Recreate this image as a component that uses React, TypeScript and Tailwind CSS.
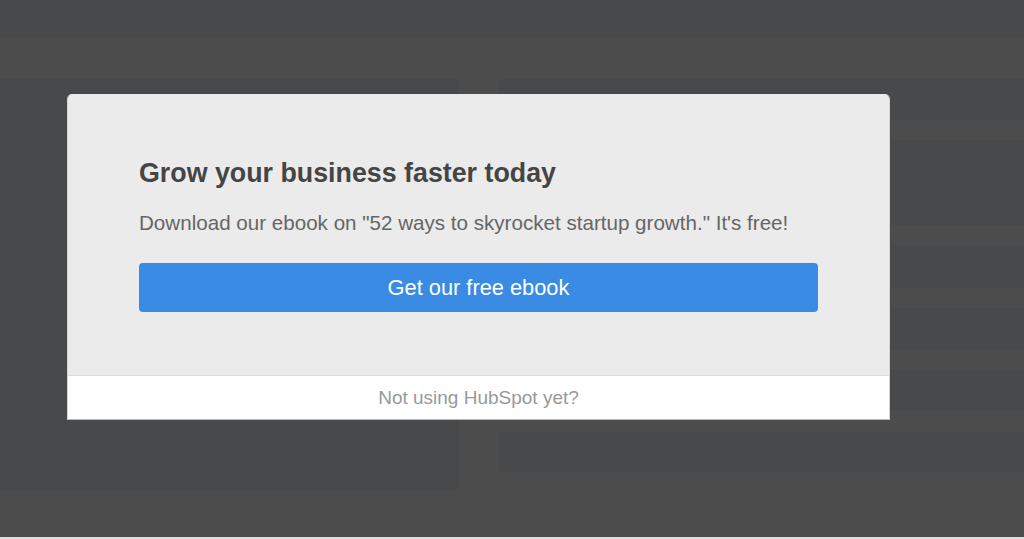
import React from "react";

const font = { fontFamily: '"Liberation Sans", Arial, Helvetica, sans-serif' };

export default function App() {
  return (
    <div className="relative w-[1024px] h-[539px] overflow-hidden bg-[#4c4c4c] flex flex-col" style={font}>
      {/* backdrop */}
      <div className="h-[37px] bg-[#48494b]" />
      <div className="h-[42px]" />
      <div className="h-[411px] flex">
        <div className="w-[458px] bg-[#48494b]" />
        <div className="w-[41px]" />
        <div className="flex-1 flex flex-col">
          <div className="h-[41px] bg-[#48494b]" />
          <div className="h-[20px]" />
          <div className="h-[85px] bg-[#48494b]" />
          <div className="h-[20px]" />
          <div className="h-[43px] bg-[#48494b]" />
          <div className="h-[20px]" />
          <div className="h-[42px] bg-[#48494b]" />
          <div className="h-[20px]" />
          <div className="h-[40px] bg-[#48494b]" />
          <div className="h-[22px]" />
          <div className="h-[40px] bg-[#48494b]" />
        </div>
      </div>
      <div className="flex-1" />
      <div className="h-[2px] bg-[#dedede]" />

      {/* modal */}
      <div className="absolute left-[67px] top-[94px] w-[823px] flex flex-col rounded-t-[5px] overflow-hidden border-x border-[#d4d4d4]">
        <div className="bg-[#ebebeb] pt-[63px] pb-[63px] px-[71px] flex flex-col">
          <h1 className="text-[26.8px] leading-[32px] font-bold text-[#454545]">
            Grow your business faster today
          </h1>
          <p className="mt-[22px] text-[20.6px] leading-[24px] text-[#666666]">
            Download our ebook on "52 ways to skyrocket startup growth." It's free!
          </p>
          <button className="mt-[28px] h-[49px] w-full rounded-[4px] bg-[#3a8be4] text-white text-[21.8px] leading-[25px] flex items-center justify-center">
            Get our free ebook
          </button>
        </div>
        <div className="h-[45px] bg-white border-t border-[#dcdcdc] border-b border-b-[#b8b8b8] flex items-center justify-center">
          <span className="text-[19px] leading-[22px] text-[#999999]">Not using HubSpot yet?</span>
        </div>
      </div>
    </div>
  );
}
